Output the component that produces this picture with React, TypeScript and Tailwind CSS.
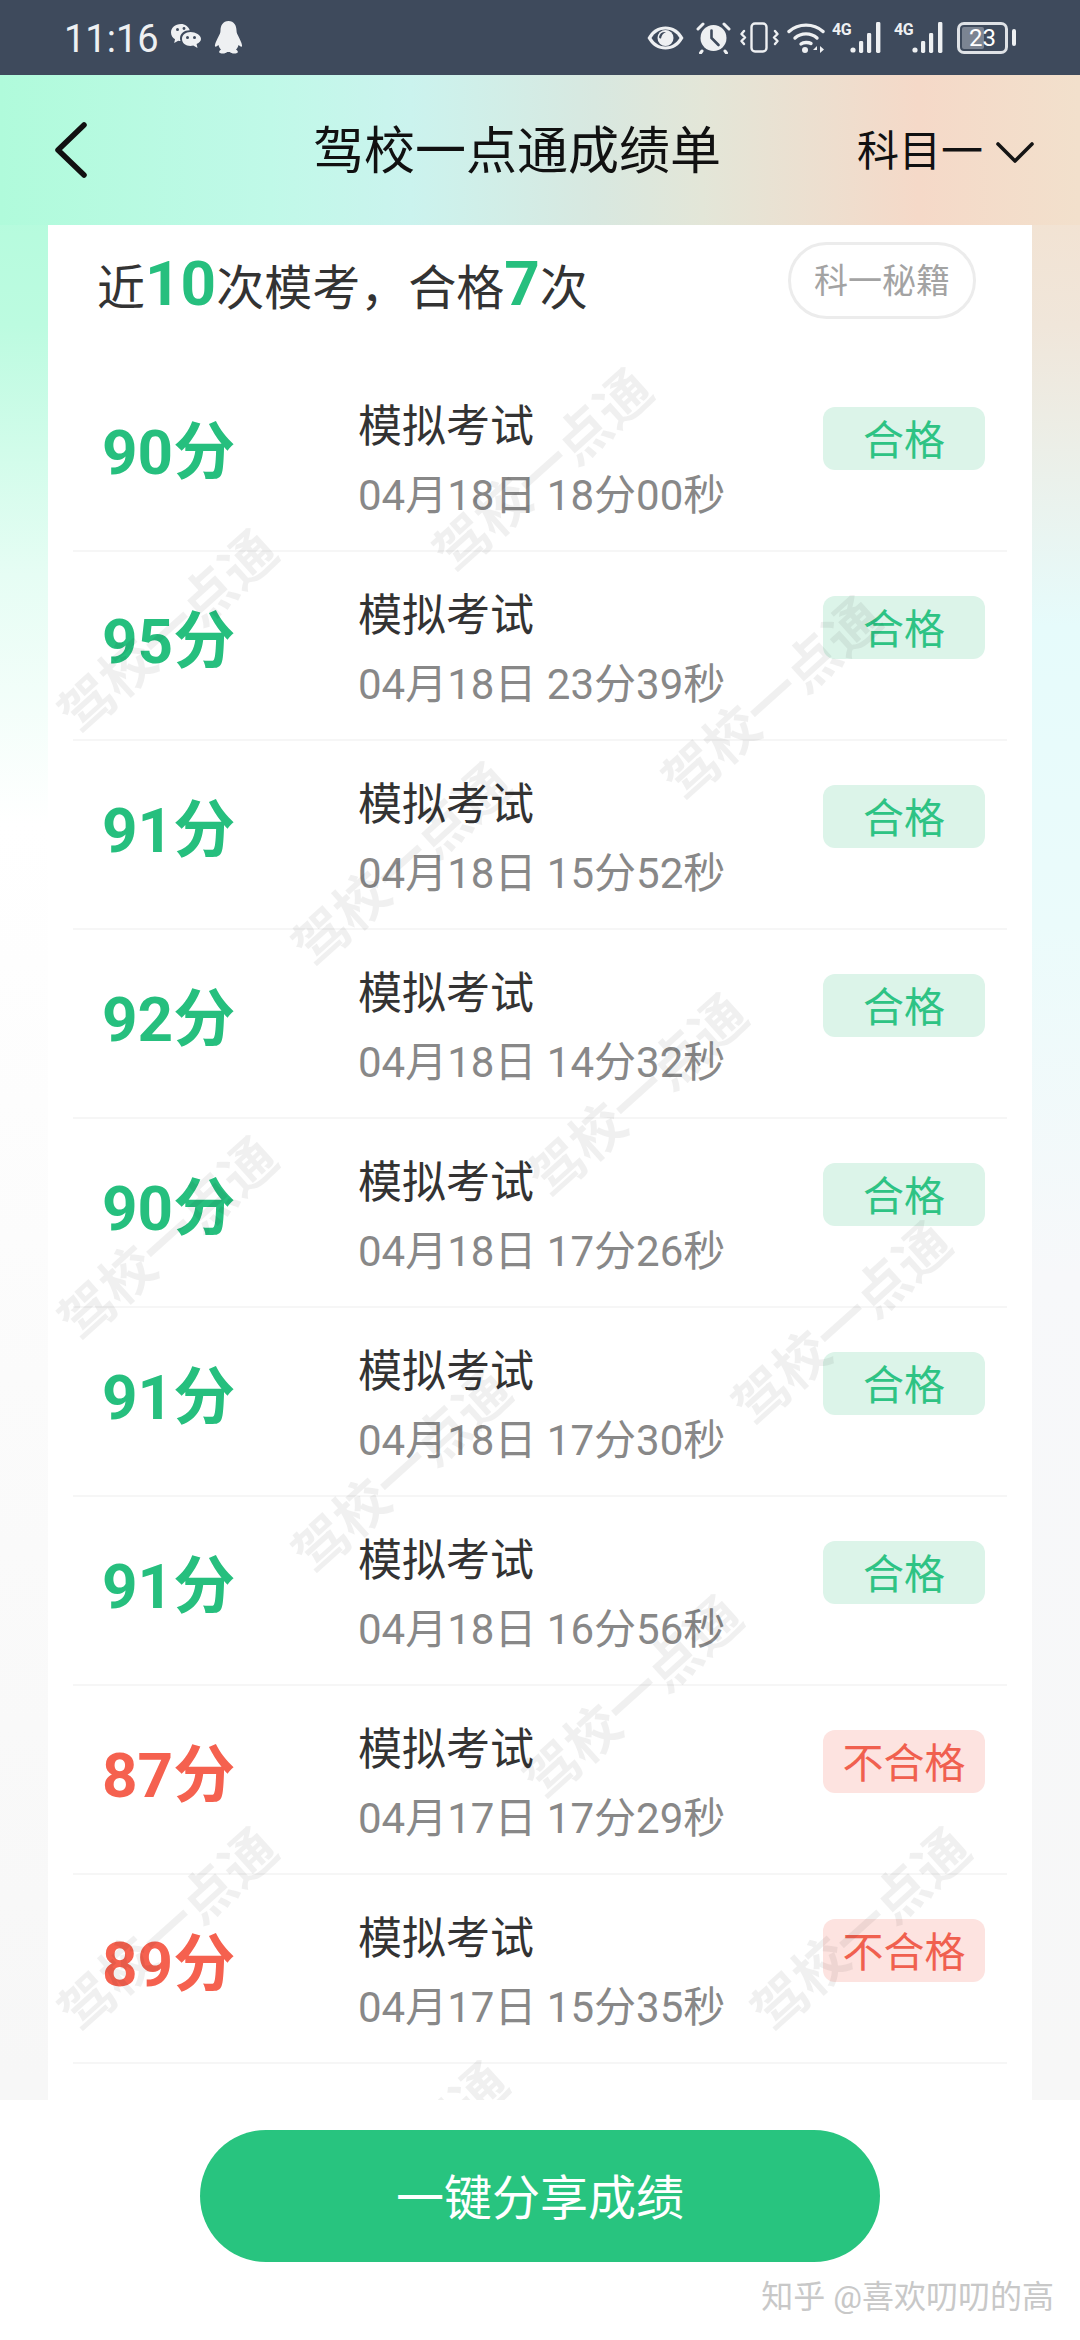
import React from "react";

const rows = [
  { s: 90, d: "04月18日 18分00秒", ok: true },
  { s: 95, d: "04月18日 23分39秒", ok: true },
  { s: 91, d: "04月18日 15分52秒", ok: true },
  { s: 92, d: "04月18日 14分32秒", ok: true },
  { s: 90, d: "04月18日 17分26秒", ok: true },
  { s: 91, d: "04月18日 17分30秒", ok: true },
  { s: 91, d: "04月18日 16分56秒", ok: true },
  { s: 87, d: "04月17日 17分29秒", ok: false },
  { s: 89, d: "04月17日 15分35秒", ok: false },
];

const marks = [
  "left-[544px] top-[397px]",
  "left-[169px] top-[558px]",
  "left-[773px] top-[625px]",
  "left-[403px] top-[791px]",
  "left-[639px] top-[1022px]",
  "left-[169px] top-[1165px]",
  "left-[843px] top-[1250px]",
  "left-[403px] top-[1398px]",
  "left-[634px] top-[1624px]",
  "left-[169px] top-[1856px]",
  "left-[862px] top-[1856px]",
  "left-[400px] top-[2090px]",
];

function Signal() {
  return (
    <svg width="34" height="31" viewBox="0 0 34 31" fill="#eef0f2">
      <circle cx="3" cy="28" r="2.6" />
      <rect x="9" y="19" width="4.2" height="12" rx="1.4" />
      <rect x="17" y="11" width="4.2" height="20" rx="1.4" />
      <rect x="26" y="0" width="4.4" height="31" rx="1.4" />
    </svg>
  );
}

function StatusBar() {
  return (
    <div className="h-[75px] shrink-0 bg-[#3e4a5c] flex items-center text-[#eef0f2] pl-[64px]">
      <span className="text-[38px] leading-none [font-family:Roboto,sans-serif] mt-[2px]">11:16</span>
      <svg className="ml-[11px]" width="32" height="30" viewBox="0 0 32 30" fill="#eef0f2">
        <path d="M11 1C5 1 1 5 1 9.500C1 12.500 2.600 14.800 5 16.300L4.200 20L8.200 17.700C9 17.900 9.800 18 10.500 18C10.200 17 10 16.200 10 15.400C10 10.600 14.400 7.200 19.800 7.300C18.500 3.600 15 1 11 1Z" />
        <path d="M20.500 9C15.500 9 12 12 12 16C12 20 15.500 23 20.500 23C21.500 23 22.400 22.900 23.300 22.600L27.500 25L26.600 21.100C29.300 19.700 31 18 31 16C31 12 25.500 9 20.500 9Z" />
        <circle cx="7.500" cy="6.500" r="1.500" fill="#3e4a5c" />
        <circle cx="14" cy="5.500" r="1.400" fill="#3e4a5c" />
        <circle cx="17.500" cy="14.500" r="1.500" fill="#3e4a5c" />
        <circle cx="24.500" cy="14.500" r="1.500" fill="#3e4a5c" />
      </svg>
      <svg className="ml-[12px]" width="29" height="33" viewBox="0 0 29 33" fill="#eef0f2">
        <path d="M14.500 0C9 0 6.500 4.500 6.500 9.500C6.500 12 5.500 13.500 4.500 15.500C2.500 19.500 0.500 23.500 1 25.500C2 26 3.500 25 4.500 24C5 26 6 27.500 7 28.500C5 29.500 4.500 31.500 6 32C8.500 33 12 32.500 13 31H16C17 32.500 20.500 33 23 32C24.500 31.500 24 29.500 22 28.500C23 27.500 24 26 24.500 24C25.500 25 27 26 28 25.500C28.500 23.500 26.500 19.500 24.500 15.500C23.500 13.500 22.500 12 22.500 9.500C22.500 4.500 20 0 14.500 0Z" />
      </svg>
      <div className="ml-auto flex items-center pr-[64px]">
        <svg width="39" height="26" viewBox="0 0 39 26" fill="none">
          <path d="M1.500 13C6 5 12 1.500 19.500 1.500C27 1.500 33 5 37.500 13C33 21 27 24.500 19.500 24.500C12 24.500 6 21 1.500 13Z" fill="#eef0f2" />
          <path d="M5.500 13C9 7.500 13.500 4.500 19.500 4.500C25.500 4.500 30 7.500 33.500 13C30 18.500 25.500 21.500 19.500 21.500C13.500 21.500 9 18.500 5.500 13Z" fill="#3e4a5c" />
          <circle cx="19.500" cy="13" r="8" fill="#eef0f2" />
          <path d="M13 12C13.500 8.500 16.500 6.500 20 7C17.500 8 15.500 10 15 13.500C14.500 13.800 13.300 13.500 13 12Z" fill="#3e4a5c" />
        </svg>
        <svg className="ml-[11px]" width="35" height="32" viewBox="0 0 35 32" fill="none">
          <path d="M2 7L7 2M33 7L28 2" stroke="#eef0f2" strokeWidth="3" strokeLinecap="round" />
          <circle cx="17.500" cy="16" r="13" fill="#eef0f2" />
          <path d="M15.500 8.500V16L22.500 23" stroke="#3e4a5c" strokeWidth="2.600" strokeLinecap="round" />
          <path d="M6 29L4.500 31M29 29L30.500 31" stroke="#eef0f2" strokeWidth="3" strokeLinecap="round" />
        </svg>
        <svg className="ml-[9px]" width="39" height="31" viewBox="0 0 39 31" fill="none" stroke="#eef0f2">
          <rect x="11.500" y="1.500" width="15" height="28" rx="3.500" strokeWidth="2.400" />
          <path d="M4 9L1.500 12L5 15.500L1.500 19L4 22M35 9L37.500 12L34 15.500L37.500 19L35 22" strokeWidth="2.400" strokeLinecap="round" strokeLinejoin="round" />
        </svg>
        <svg className="ml-[8px]" width="38" height="31" viewBox="0 0 38 31" fill="none">
          <path d="M2 9.500C11.500 1 26.500 1 36 9.500" stroke="#eef0f2" strokeWidth="3.400" strokeLinecap="round" />
          <path d="M8 16C14 10.500 24 10.500 30 16" stroke="#eef0f2" strokeWidth="3.400" strokeLinecap="round" />
          <path d="M14 22C16.500 20 21.500 20 24 21.500" stroke="#eef0f2" strokeWidth="3.400" strokeLinecap="round" />
          <circle cx="18" cy="28" r="3" fill="#eef0f2" />
          <path d="M30 24L26 28H30ZM31.500 23V31M33 24V31L37 27.500Z" fill="#eef0f2" />
        </svg>
        <div className="ml-[7px] flex items-start h-[31px]">
          <span className="text-[16px] font-bold leading-[15px] [font-family:Roboto,sans-serif] w-[18px] tracking-[-0.5px]">4G</span>
          <Signal />
        </div>
        <div className="ml-[10px] flex items-start h-[31px]">
          <span className="text-[16px] font-bold leading-[15px] [font-family:Roboto,sans-serif] w-[18px] tracking-[-0.5px]">4G</span>
          <Signal />
        </div>
        <div className="ml-[11px] w-[51px] h-[32px] rounded-[7px] border-[3px] border-[#dfe2e6] flex items-center relative p-[2px] pr-[12px]">
          <div className="h-full w-[22px] bg-[#7b8492] rounded-[2px]" />
          <span className="absolute inset-0 flex items-center justify-center text-[24px] leading-none [font-family:Roboto,sans-serif] text-white">23</span>
        </div>
        <div className="ml-[4px] w-[4px] h-[17px] rounded-[2px] bg-[#eef0f2]" />
      </div>
    </div>
  );
}

function Row({ s, d, ok }: { s: number; d: string; ok: boolean }) {
  return (
    <div className="h-[189px] mx-[25px] border-b-2 border-[#f6f6f6] flex items-start pl-[29px] pr-[22px]">
      <div className={`w-[256px] mt-[54px] text-[62px] leading-[72px] font-bold ${ok ? "text-[#26bf7e]" : "text-[#f5614f]"}`}>{s}分</div>
      <div className="pt-[30px]">
        <div className="text-[44px] leading-[68px] text-[#333333]">模拟考试</div>
        <div className="text-[42px] leading-[70px] text-[#888888] whitespace-nowrap">{d}</div>
      </div>
      <div className={`ml-auto mt-[44px] w-[162px] h-[63px] pt-[5px] rounded-[12px] flex items-center justify-center text-[41px] leading-none ${ok ? "bg-[#dcf4e9] text-[#2ec384]" : "bg-[#fde3e0] text-[#f0604f]"}`}>
        {ok ? "合格" : "不合格"}
      </div>
    </div>
  );
}

export default function App() {
  return (
    <div className="w-[1080px] h-[2340px] flex flex-col overflow-hidden relative [font-family:Roboto,'Noto_Sans_CJK_SC',sans-serif]">
      <StatusBar />
      <div className="flex-1 min-h-0 relative overflow-hidden [background:linear-gradient(to_bottom,#aefbda_0,#bcfbe0_250px,#e6fdf4_500px,#ffffff_750px,#fbfbfb_1300px,#f7f7f7_2000px)_left_top/50%_100%_no-repeat,linear-gradient(to_bottom,#f5dec9_0,#f0e6da_250px,#e6fbfb_550px,#ebfbfb_850px,#f7f8fa_1200px,#f7f7f7_2000px)_right_top/50%_100%_no-repeat]">
        <div className="h-[150px] flex items-center pl-[54px] bg-[linear-gradient(to_right,#b0fbdb_0%,#c0f9e8_25%,#cbf3ee_38%,#d8e8e0_55%,#e3e6d8_65%,#f5d9c8_85%,#f2e0cc_100%)]">
          <svg width="33" height="56" viewBox="0 0 33 56" fill="none" className="shrink-0">
            <path d="M30 3L4 28L30 53" stroke="#111111" strokeWidth="5.500" strokeLinecap="round" strokeLinejoin="round" />
          </svg>
          <h1 className="ml-[226px] mt-[3px] text-[51px] leading-none font-normal text-[#111111] whitespace-nowrap">驾校一点通成绩单</h1>
          <span className="ml-[136px] mt-[3px] text-[42px] leading-none text-[#111111]">科目一</span>
          <svg width="38" height="22" viewBox="0 0 38 22" fill="none" className="ml-[13px] mt-[6px] shrink-0">
            <path d="M2 2L19 19L36 2" stroke="#151515" strokeWidth="3.600" strokeLinecap="round" strokeLinejoin="round" />
          </svg>
        </div>
        <div className="mx-[48px] bg-white h-[1875px]">
          <div className="h-[138px] flex items-start pl-[49px] pr-[56px]">
            <div className="mt-[21px] text-[48px] leading-[76px] text-[#333333] whitespace-nowrap">
              近<span className="text-[62px] font-bold text-[#26bf7e]">10</span>次模考，合格<span className="text-[62px] font-bold text-[#26bf7e]">7</span>次
            </div>
            <div className="ml-auto mt-[17px] w-[188px] h-[77px] rounded-full border-[3px] border-[#ececec] flex items-center justify-center text-[34px] leading-none text-[#a3a3a3] whitespace-nowrap">
              科一秘籍
            </div>
          </div>
          {rows.map((r) => (
            <Row key={r.s + r.d} {...r} />
          ))}
        </div>
        {marks.map((m) => (
          <div
            key={m}
            className={`absolute ${m} -translate-x-1/2 -translate-y-1/2 -rotate-[42deg] text-[54px] leading-none font-bold text-black/[0.06] whitespace-nowrap pointer-events-none`}
          >
            驾校一点通
          </div>
        ))}
      </div>
      <div className="h-[240px] shrink-0 bg-white relative flex justify-center items-start pt-[30px]">
        <div className="w-[680px] h-[132px] pt-[5px] rounded-full bg-[#28c47f] flex items-center justify-center text-[48px] leading-none text-white">
          一键分享成绩
        </div>
        <div className="absolute right-[26px] top-[177px] text-[32px] leading-[40px] text-[#c8c8c8] whitespace-nowrap">
          知乎 @喜欢叨叨的高
        </div>
      </div>
    </div>
  );
}
